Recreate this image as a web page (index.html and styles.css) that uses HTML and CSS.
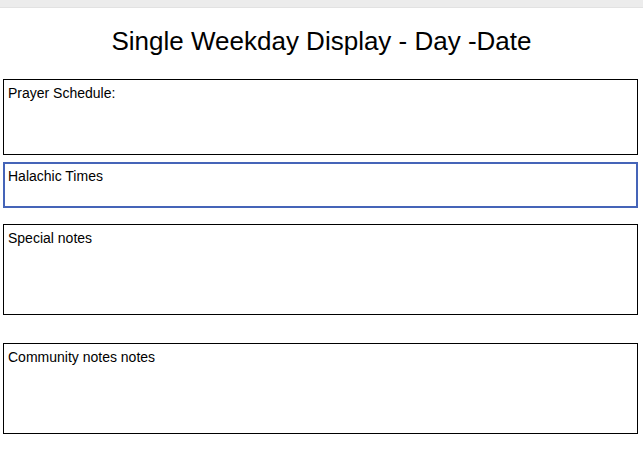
FILE: index.html
```html
<!DOCTYPE html>
<html>
<head>
<meta charset="utf-8">
<link rel="stylesheet" href="styles.css">
</head>
<body>
<div class="topbar"></div>
<h1 class="title">Single Weekday Display - Day -Date</h1>
<div class="sections">
  <div class="box box-prayer">Prayer Schedule:</div>
  <div class="box box-halachic">Halachic Times</div>
  <div class="box box-special">Special notes</div>
  <div class="box box-community">Community notes notes</div>
</div>
</body>
</html>
```
FILE: styles.css
```css
html, body {
  margin: 0;
  padding: 0;
  background: #ffffff;
  font-family: "Liberation Sans", Arial, sans-serif;
  color: #000;
}
.topbar {
  height: 7px;
  background: #ececec;
  border-bottom: 1px solid #e2e2e2;
}
.title {
  margin: 18px 0 0 0;
  height: 53px;
  font-size: 26px;
  font-weight: normal;
  line-height: 30px;
  text-align: center;
}
.sections {
  display: flex;
  flex-direction: column;
  margin: 0 5px 0 3px;
}
.box {
  box-sizing: border-box;
  border: 1px solid #000;
  padding: 5px 4px;
  font-size: 14px;
  line-height: 16px;
}
.box-prayer { height: 76px; }
.box-halachic {
  height: 46px;
  margin-top: 7px;
  border: 2px solid #4564b8;
  padding: 4px 3px;
}
.box-special { height: 91px; margin-top: 16px; }
.box-community { height: 91px; margin-top: 28px; }
```
